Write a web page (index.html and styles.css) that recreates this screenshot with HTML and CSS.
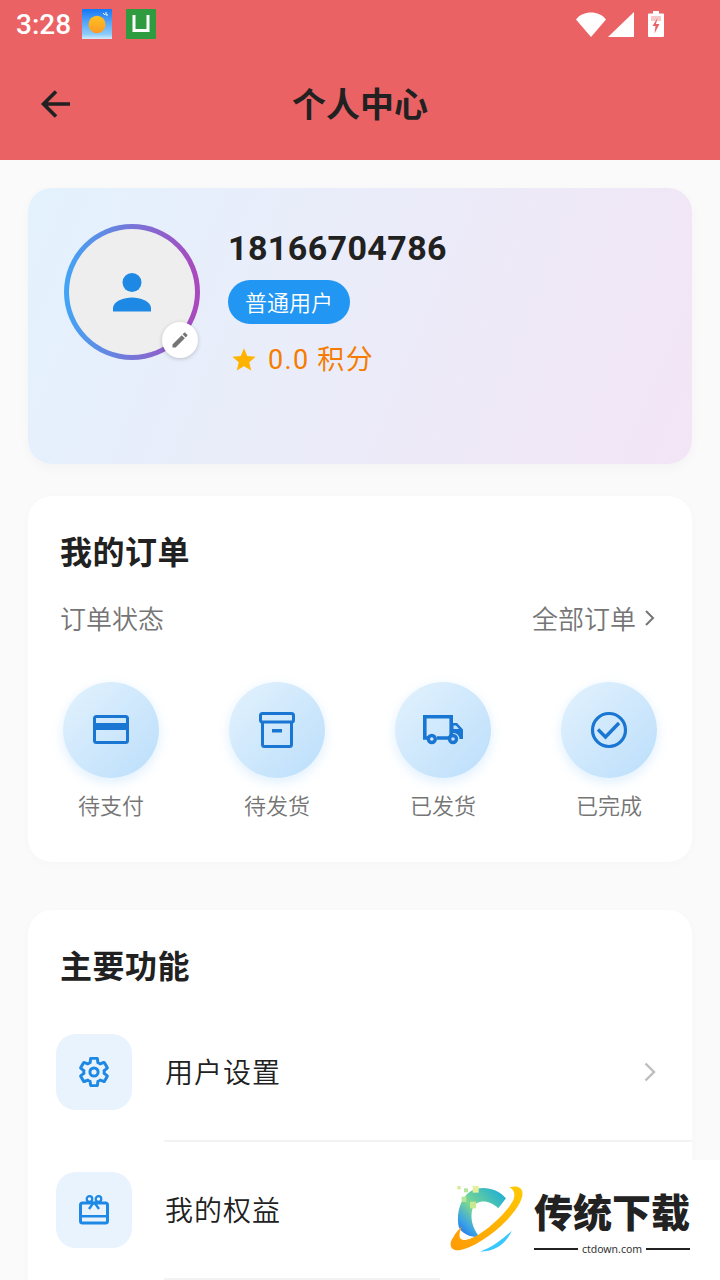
FILE: index.html
```html
<!DOCTYPE html>
<html lang="zh-CN">
<head>
<meta charset="utf-8">
<title>个人中心</title>
<link rel="stylesheet" href="styles.css">
</head>
<body>
<div class="screen">
  <header class="header">
    <div class="status">
      <span class="time">3:28</span>
      <svg class="app-icon weather" viewBox="0 0 30 30"><defs><linearGradient id="sky" x1="0" y1="0" x2="0" y2="1"><stop offset="0" stop-color="#1578f5"/><stop offset=".85" stop-color="#8fcdfb"/><stop offset="1" stop-color="#d6ecfb"/></linearGradient><linearGradient id="sun" x1="0" y1="0" x2="0" y2="1"><stop offset="0" stop-color="#ffc21f"/><stop offset="1" stop-color="#fb9a26"/></linearGradient></defs><rect width="30" height="30" fill="url(#sky)"/><ellipse cx="15" cy="15.500" rx="8.500" ry="8.800" fill="url(#sun)"/><path d="M21 4l2 2M24 3v3h2" stroke="#fff" stroke-width="1" fill="none"/></svg>
      <svg class="app-icon green" viewBox="0 0 30 30"><rect width="30" height="30" rx="1" fill="#2e9b3e"/><path d="M6.500 6v17h17V6h-3v14h-11V6z" fill="#fff"/></svg>
      <span class="status-right">
        <svg class="wifi" viewBox="0 0 30 26"><path d="M0 8.500C4 3.500 9 1.500 15 1.500s11 2 15 7L15 26z" fill="#fff"/></svg>
        <svg class="signal" viewBox="0 0 26 26"><path d="M26 1v25H0z" fill="#fff"/></svg>
        <svg class="battery" viewBox="0 0 16 26"><path d="M5 0h6v2.500h4a1 1 0 0 1 1 1V25a1 1 0 0 1-1 1H1a1 1 0 0 1-1-1V3.500a1 1 0 0 1 1-1h4z" fill="#fff"/><path d="M9.500 7L4.500 15h3l-1 7.500 5-9.500H8z" fill="#eb6265"/><path d="M3 5h10v5H3z" fill="#eb6265" opacity=".35"/></svg>
      </span>
    </div>
    <div class="toolbar">
      <svg class="back" viewBox="0 0 36 36"><path d="M32 18H6M18 5.500L5.500 18 18 30.500" fill="none" stroke="#212121" stroke-width="3.600"/></svg>
      <h1 class="title">个人中心</h1>
    </div>
  </header>

  <main class="content">
    <section class="profile">
      <div class="avatar-wrap">
        <div class="avatar-ring">
          <div class="avatar">
            <svg class="person" viewBox="0 0 40 40"><circle cx="20" cy="10.500" r="9.500" fill="#1e88e5"/><path d="M1 39.500v-3.500c0-6.500 11-10.500 19-10.500s19 4 19 10.500v3.500z" fill="#1e88e5"/></svg>
          </div>
        </div>
        <div class="edit">
          <svg viewBox="0 0 24 24"><path d="M3 17.250V21h3.750L17.810 9.940l-3.750-3.750L3 17.250zM20.710 7.040a1 1 0 0 0 0-1.410l-2.340-2.340a1 1 0 0 0-1.410 0l-1.830 1.830 3.750 3.750 1.830-1.830z" fill="#757575"/></svg>
        </div>
      </div>
      <div class="info">
        <div class="phone">18166704786</div>
        <div class="badge">普通用户</div>
        <div class="points">
          <svg viewBox="0 0 24 24"><path d="M12 17.270L18.180 21l-1.640-7.030L22 9.240l-7.190-.61L12 2 9.190 8.630 2 9.240l5.460 4.730L5.820 21z" fill="#ffb300"/></svg>
          <span>0.0 积分</span>
        </div>
      </div>
    </section>

    <section class="card orders">
      <h2 class="card-title">我的订单</h2>
      <div class="order-head">
        <span>订单状态</span>
        <span class="all">全部订单<svg viewBox="0 0 16 24"><path d="M4 5l7 7-7 7" fill="none" stroke="#757575" stroke-width="2"/></svg></span>
      </div>
      <div class="order-grid">
        <div class="order-item">
          <div class="circle"><svg viewBox="0 0 40 40"><rect x="3.500" y="6.500" width="33" height="26" rx="2" fill="none" stroke="#1976d2" stroke-width="3"/><rect x="3" y="13" width="34" height="7" fill="#1976d2"/></svg></div>
          <span>待支付</span>
        </div>
        <div class="order-item">
          <div class="circle"><svg viewBox="0 0 40 40"><rect x="3.500" y="3.500" width="33" height="8.500" rx="2" fill="none" stroke="#1976d2" stroke-width="3"/><path d="M5.500 12V34.500a2 2 0 0 0 2 2h25a2 2 0 0 0 2-2V12" fill="none" stroke="#1976d2" stroke-width="3"/><rect x="15" y="19" width="10" height="3.500" fill="#1976d2"/></svg></div>
          <span>待发货</span>
        </div>
        <div class="order-item">
          <div class="circle"><svg viewBox="0 0 40 40"><path d="M5 28H1.800V6.800h26.400V28H14" fill="none" stroke="#1976d2" stroke-width="3.600"/><path d="M28 13h6l6 6.500V29h-3.500a6 6 0 0 0-12 0H28z" fill="#1976d2"/><path d="M30.500 15.500h2.500l3 3.500h-5.500z" fill="#c5e1fb"/><circle cx="8.800" cy="29" r="3.500" fill="#d2e8fc" stroke="#1976d2" stroke-width="3.400"/><circle cx="30" cy="29" r="3.500" fill="#c5e1fb" stroke="#1976d2" stroke-width="3.400"/></svg></div>
          <span>已发货</span>
        </div>
        <div class="order-item">
          <div class="circle"><svg viewBox="0 0 40 40"><circle cx="20" cy="20" r="16.500" fill="none" stroke="#1976d2" stroke-width="3.200"/><path d="M9 19.500l7.500 7.500L30 13" fill="none" stroke="#1976d2" stroke-width="3.400"/></svg></div>
          <span>已完成</span>
        </div>
      </div>
    </section>

    <section class="card features">
      <h2 class="card-title">主要功能</h2>
      <div class="row">
        <div class="row-icon"><svg viewBox="1 1 22 22"><path d="M19.430 12.980c.04-.32.070-.64.070-.98s-.03-.66-.07-.98l2.110-1.650c.19-.15.240-.42.120-.64l-2-3.460c-.12-.22-.39-.30-.61-.22l-2.490 1c-.52-.40-1.080-.73-1.690-.98l-.38-2.650A.49.490 0 0 0 14 2h-4c-.25 0-.46.180-.49.420l-.38 2.650c-.61.250-1.170.59-1.690.98l-2.490-1c-.23-.09-.49 0-.61.220l-2 3.460c-.13.220-.07.490.12.640l2.110 1.650c-.04.320-.07.650-.07.980s.03.660.07.980l-2.110 1.650c-.19.150-.24.420-.12.640l2 3.460c.12.220.39.300.61.220l2.490-1c.52.400 1.080.730 1.690.980l.38 2.650c.03.240.24.420.49.420h4c.25 0 .46-.18.49-.42l.38-2.650c.61-.25 1.170-.59 1.690-.98l2.490 1c.23.090.49 0 .61-.22l2-3.460c.12-.22.070-.49-.12-.64l-2.110-1.650z" fill="none" stroke="#1e88e5" stroke-width="2.200"/><circle cx="12" cy="12" r="3" fill="none" stroke="#1e88e5" stroke-width="2.200"/></svg></div>
        <span class="row-label">用户设置</span>
        <svg class="row-arrow" viewBox="0 0 16 24"><path d="M3.500 3.500l8.500 8.500-8.500 8.500" fill="none" stroke="#bdbdbd" stroke-width="2.400"/></svg>
      </div>
      <div class="row">
        <div class="row-icon"><svg viewBox="0 0 30 30"><rect x="1.500" y="8" width="27" height="20" rx="2" fill="none" stroke="#1e88e5" stroke-width="3"/><rect x="1.500" y="20" width="27" height="2.500" fill="#1e88e5"/><circle cx="10.500" cy="4" r="2.800" fill="none" stroke="#1e88e5" stroke-width="2.200"/><circle cx="19.500" cy="4" r="2.800" fill="none" stroke="#1e88e5" stroke-width="2.200"/><path d="M15 7l-5 7M15 7l5 7" stroke="#1e88e5" stroke-width="2.400" fill="none"/></svg></div>
        <span class="row-label">我的权益</span>
      </div>
    </section>
  </main>

  <aside class="watermark">
    <svg class="wm-logo" viewBox="60 108 222 204"><defs><linearGradient id="ringc" x1="0" y1="1" x2="1" y2="0"><stop offset="0" stop-color="#ff9a05"/><stop offset="1" stop-color="#ffc904"/></linearGradient><linearGradient id="cc" x1="1" y1="0" x2="0" y2="1"><stop offset="0" stop-color="#10a8e0"/><stop offset=".55" stop-color="#7cd88f"/><stop offset=".8" stop-color="#38a0e8"/><stop offset="1" stop-color="#1e5fe8"/></linearGradient></defs><path d="M228 145C200 112 150 105 120 125C90 145 80 190 85 225C90 250 120 262 150 262C130 240 118 205 128 175C140 145 180 150 205 175Z" fill="url(#cc)"/><path d="M238 112C265 105 285 115 275 145C255 205 150 290 90 300C60 305 55 280 70 262C75 250 85 240 95 230C85 255 85 270 105 270C150 265 230 190 250 150C258 130 250 118 238 112Z" fill="url(#ringc)"/><path d="M245 242C230 280 195 305 150 305C190 290 220 265 245 242Z" fill="#39c8fb"/><rect x="82" y="108" width="10" height="10" fill="#d4ec9a"/><rect x="102" y="115" width="12" height="12" fill="#b5e59a"/><rect x="128" y="108" width="18" height="20" fill="#e6f09a"/><rect x="95" y="140" width="14" height="16" fill="#b5e59a"/><rect x="120" y="155" width="18" height="20" fill="#c8e98f"/></svg>
    <div class="wm-text">
      <div class="wm-name">传统下载</div>
      <div class="wm-url"><i></i><span>ctdown.com</span><i></i></div>
    </div>
  </aside>
</div>
</body>
</html>
```
FILE: styles.css
```css
* { box-sizing: border-box; }
html, body { margin: 0; padding: 0; }
body { font-family: "Noto Sans CJK SC", "Noto Sans", sans-serif; background: #fafafa; }
.screen { position: relative; width: 720px; height: 1280px; overflow: hidden; background: #fafafa; }

.header { height: 160px; background: #eb6265; }
.status { height: 48px; display: flex; align-items: center; padding-left: 16px; }
.time { font-family: Roboto, sans-serif; font-size: 28px; font-weight: 500; color: #fff; width: 66px; }
.app-icon { display: block; width: 30px; height: 30px; }
.green { margin-left: 14px; }
.status-right { margin-left: auto; display: flex; align-items: center; padding-right: 56px; }
.wifi { width: 30px; height: 26px; display: block; margin-top: -1px; }
.signal { width: 26px; height: 26px; display: block; margin-left: 2px; }
.battery { width: 16px; height: 26px; display: block; margin-left: 14px; }

.toolbar { position: relative; height: 112px; display: flex; align-items: center; justify-content: center; }
.back { position: absolute; left: 38px; top: 38px; width: 36px; height: 36px; }
.title { margin: 0; padding-bottom: 2px; font-size: 34px; font-weight: 700; color: #212121; line-height: 46px; }

.content { padding: 28px 28px 0; display: flex; flex-direction: column; }
.profile { height: 276px; border-radius: 24px; padding: 36px; display: flex; background: linear-gradient(113deg, #e3f2fd 0%, #f3e5f5 100%); box-shadow: 0 4px 12px rgba(0,0,0,.03); }
.avatar-wrap { position: relative; width: 136px; height: 136px; flex: none; }
.avatar-ring { width: 136px; height: 136px; border-radius: 50%; padding: 5px; background: linear-gradient(90deg, #42a5f5, #ab47bc); }
.avatar { width: 100%; height: 100%; border-radius: 50%; background: #eeeeee; display: flex; align-items: center; justify-content: center; }
.person { width: 40px; height: 40px; }
.edit { position: absolute; right: 2px; bottom: 2px; width: 36px; height: 36px; border-radius: 50%; background: #fff; box-shadow: 0 1px 4px rgba(0,0,0,.2); display: flex; align-items: center; justify-content: center; }
.edit svg { width: 20px; height: 20px; }
.info { margin-left: 28px; display: flex; flex-direction: column; align-items: flex-start; }
.phone { font-family: Roboto, sans-serif; font-size: 34px; font-weight: 700; color: #212121; letter-spacing: .4px; line-height: 48px; }
.badge { margin-top: 8px; height: 44px; padding: 0 17px; border-radius: 22px; background: #2196f3; color: #fff; font-size: 22px; font-weight: 350; line-height: 42px; }
.points { margin-top: 12px; display: flex; align-items: center; margin-left: 2px; color: #f57c00; font-family: Roboto, "Noto Sans CJK SC", sans-serif; font-weight: 400; font-size: 27px; line-height: 48px; letter-spacing: 1.3px; }
.points svg { width: 28px; height: 28px; margin-right: 10px; }

.card { background: #fff; border-radius: 24px; box-shadow: 0 2px 10px rgba(0,0,0,.02); }
.card-title { margin: 0; font-size: 32px; font-weight: 700; color: #212121; line-height: 46px; letter-spacing: .5px; }
.orders { margin-top: 32px; height: 366px; padding: 31px 32px 0; }
.order-head { margin-top: 26px; display: flex; justify-content: space-between; align-items: center; font-size: 26px; font-weight: 350; color: #757575; line-height: 38px; }
.all { display: flex; align-items: center; margin-right: 3px; }
.all svg { width: 16px; height: 24px; margin-left: 6px; margin-right: -1px; }
.order-grid { margin-top: 45px; display: grid; grid-template-columns: repeat(4, 96px); justify-content: space-between; padding: 0 3px; }
.order-item { display: flex; flex-direction: column; align-items: center; font-size: 22px; font-weight: 350; color: #757575; line-height: 32px; white-space: nowrap; }
.circle { width: 96px; height: 96px; border-radius: 50%; background: linear-gradient(135deg, #e3f2fd, #bbdefb); box-shadow: 0 4px 12px rgba(33,150,243,.15); display: flex; align-items: center; justify-content: center; margin-bottom: 10px; }
.circle svg { width: 40px; height: 40px; }

.features { margin-top: 48px; height: 400px; padding: 31px 0 0; }
.features .card-title { padding-left: 32px; margin-bottom: 17px; }
.row { position: relative; height: 138px; display: flex; align-items: center; padding: 0 0 2px 28px; }
.row-icon { width: 76px; height: 76px; border-radius: 20px; background: #e8f3fd; display: flex; align-items: center; justify-content: center; flex: none; }
.row-icon svg { width: 30px; height: 30px; }
.row-label { margin: 0 0 2px 33px; font-size: 28px; font-weight: 350; color: #212121; letter-spacing: 1px; line-height: 40px; }
.row-arrow { position: absolute; right: 34px; top: 50%; margin-top: -13px; width: 16px; height: 24px; }
.row::after { content: ""; position: absolute; left: 136px; right: 0; bottom: 0; height: 2px; background: #f3f3f3; }

.watermark { position: absolute; left: 440px; top: 1160px; width: 280px; height: 120px; background: #fff; display: flex; padding: 26px 0 0 10px; }
.wm-logo { width: 74px; height: 68px; flex: none; }
.wm-text { margin-left: 10px; width: 156px; margin-top: -2px; }
.wm-name { font-size: 39px; font-weight: 900; color: #222; line-height: 56px; white-space: nowrap; margin-top: -2px; }
.wm-url { display: flex; align-items: center; font-family: "Noto Sans", sans-serif; font-size: 10.500px; color: #333; gap: 4px; line-height: 14px; margin-top: 4px; white-space: nowrap; }
.wm-url i { flex: 1; height: 2px; background: #222; }
```
